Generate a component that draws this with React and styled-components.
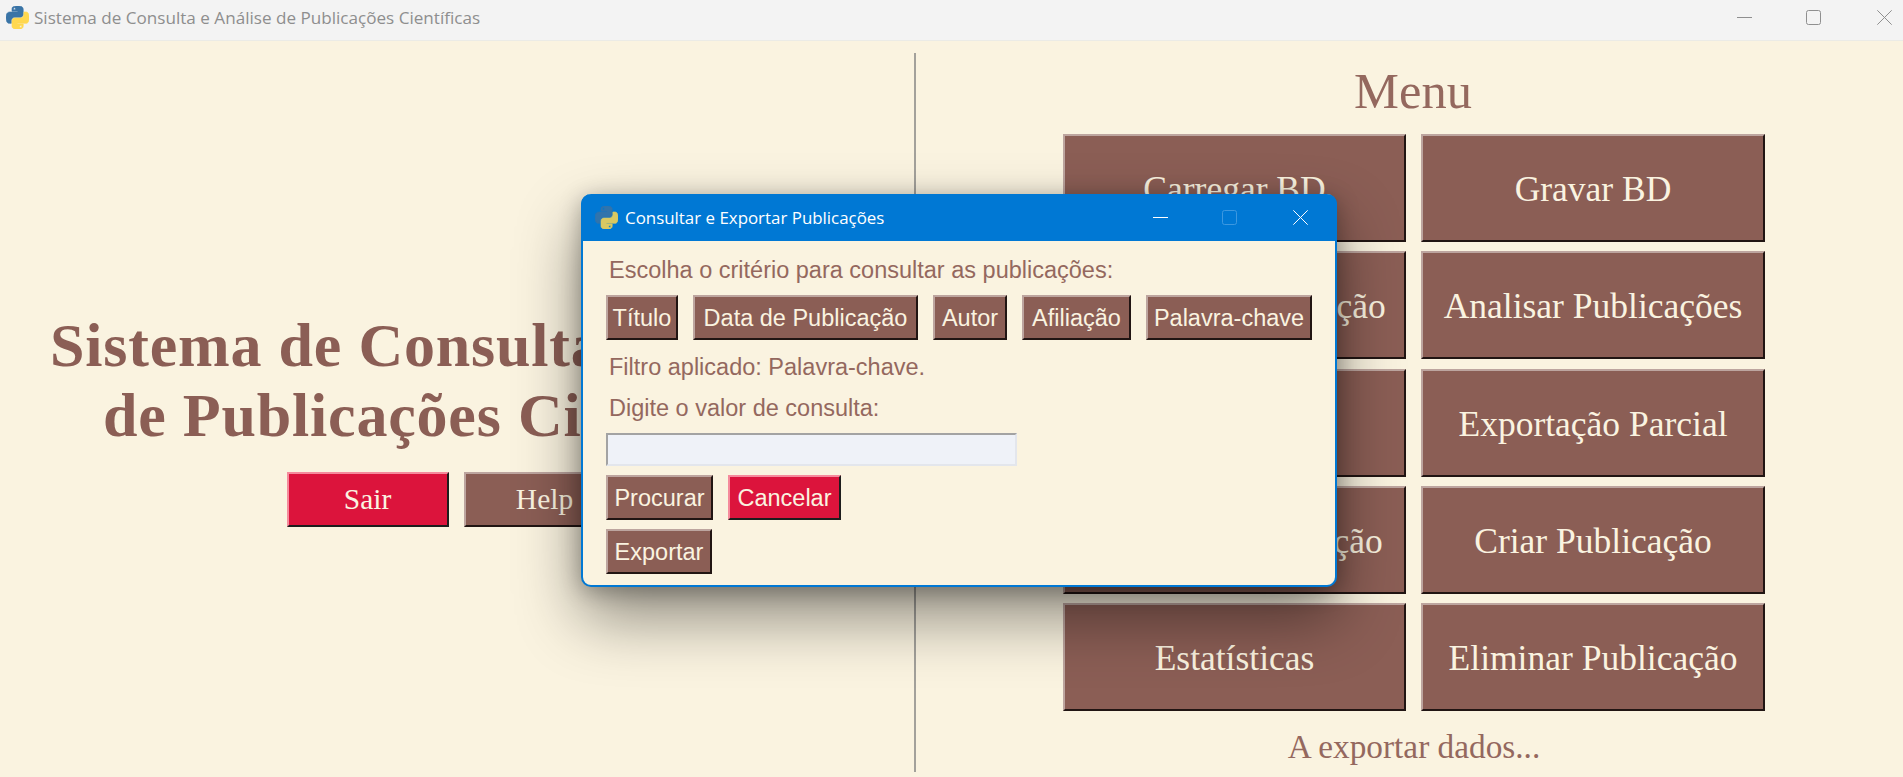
import React from 'react'
import styled, { createGlobalStyle } from 'styled-components'

const cream = '#faf3e0'
const brown = '#8b5e55'
const softBrown = '#94685e'
const crimson = '#dc143c'
const blue = '#0078d4'

const GlobalStyle = createGlobalStyle`
html, body {
    margin: 0;
    padding: 0;
    height: 100%;
    overflow: hidden;
    background: ${cream};
}
`

const Page = styled.div`
position: relative;
width: 1903px;
height: 777px;
display: flex;
flex-direction: column;
overflow: hidden;
background: ${cream};
`

const TitleBar = styled.header`
height: 41px;
flex: none;
display: flex;
align-items: center;
padding: 0 0 6px 6px;
background: #f3f3f3;
border-bottom: 1px solid #ebebe6;
box-sizing: border-box;
`

const AppTitle = styled.span`
margin-left: 5px;
font-family: "Open Sans", sans-serif;
font-size: 17.1px;
color: #8e8e8e;
flex: 1;
white-space: nowrap;
`

const Controls = styled.div`
display: flex;
align-items: center;
height: 100%;
`

const ControlSlot = styled.span`
width: ${props => props.$w}px;
display: flex;
justify-content: flex-start;
`

const Main = styled.main`
flex: 1;
display: flex;
min-height: 0;
`

const LeftPane = styled.section`
width: 914px;
flex: none;
display: flex;
flex-direction: column;
align-items: center;
padding: 269px 2px 0 0;
box-sizing: border-box;
`

const BigTitle = styled.h1`
margin: 0;
font-family: "Liberation Serif", serif;
font-weight: 700;
font-size: 62px;
letter-spacing: 0.8px;
line-height: 70px;
color: ${brown};
text-align: center;
white-space: nowrap;
`

const ButtonRow = styled.div`
display: flex;
gap: 15px;
margin-top: 22px;
`

const PanelButton = styled.button`
box-sizing: border-box;
display: flex;
align-items: center;
justify-content: center;
width: ${props => props.$wide ? '100%' : '162px'};
height: ${props => props.$wide ? '108px' : '55px'};
padding: ${props => props.$wide ? '2px 0 0' : '0'};
font-family: "Liberation Serif", serif;
font-size: ${props => props.$wide ? '35.5px' : '29.5px'};
color: ${cream};
background: ${props => props.$danger ? crimson : brown};
border: 2px solid;
border-color: ${props => props.$danger ? '#f58a9c #1d1d1d #1d1d1d #f58a9c' : '#bda59f #211513 #211513 #bda59f'};
`

const Divider = styled.div`
width: 2px;
flex: none;
margin: 12px 0 5px;
background: #a3a19b;
`

const RightPane = styled.section`
flex: 1;
display: flex;
flex-direction: column;
padding-left: 147px;
`

const MenuColumn = styled.div`
width: 702px;
display: flex;
flex-direction: column;
align-items: center;
`

const MenuTitle = styled.h2`
margin: 0 2px 0 0;
height: 93px;
font-family: "Liberation Serif", serif;
font-weight: 400;
font-size: 50.5px;
line-height: 100px;
color: ${softBrown};
`

const MenuGrid = styled.div`
display: grid;
grid-template-columns: 343px 344px;
grid-auto-rows: 108px;
column-gap: 15px;
row-gap: 9.25px;
`

const Status = styled.p`
margin: 16px 0 0;
font-family: "Liberation Serif", serif;
font-size: 33.3px;
line-height: 40px;
color: ${softBrown};
`

const Dialog = styled.div`
position: absolute;
left: 581px;
top: 194px;
width: 756px;
height: 393px;
box-sizing: border-box;
display: flex;
flex-direction: column;
background: ${cream};
border: 2px solid ${blue};
border-top: 0;
border-radius: 10px;
box-shadow: 0 30px 64px rgba(0, 0, 0, 0.44), 0 4px 22px rgba(0, 0, 0, 0.28);
`

const DialogBar = styled.div`
height: 47px;
flex: none;
margin: 0 -2px;
display: flex;
align-items: center;
padding-left: 14px;
background: ${blue};
border-radius: 10px 10px 0 0;
`

const DialogTitle = styled.span`
margin-left: 7px;
flex: 1;
font-family: "Open Sans", sans-serif;
font-size: 16.9px;
color: #fff;
white-space: nowrap;
`

const DialogBody = styled.div`
padding: 15px 0 0 23px;
display: flex;
flex-direction: column;
align-items: flex-start;
`

const Label = styled.div`
margin: ${props => props.$top || 0}px 0 0 3px;
height: 28px;
font-family: "Liberation Sans", sans-serif;
font-size: 23.5px;
line-height: 28px;
color: ${softBrown};
white-space: nowrap;
`

const ToolRow = styled.div`
display: flex;
gap: 15px;
margin-top: ${props => props.$top}px;
`

const ToolButton = styled.button`
box-sizing: border-box;
width: ${props => props.$w}px;
height: 45px;
padding: 1px 0 0;
font-family: "Liberation Sans", sans-serif;
font-size: 23.5px;
color: ${cream};
background: ${props => props.$danger ? crimson : brown};
border: 2px solid;
border-color: ${props => props.$danger ? '#f58a9c #1d1d1d #1d1d1d #f58a9c' : '#bda59f #211513 #211513 #bda59f'};
white-space: nowrap;
`

const SearchInput = styled.input`
box-sizing: border-box;
display: block;
width: 411px;
height: 33px;
margin-top: 11px;
padding: 0 4px;
background: #eff2f8;
border: 2px solid;
border-color: #a3a3a3 #e3e6ec #e3e6ec #a3a3a3;
`

const LogoMark = styled.svg`
flex: none;
opacity: ${props => props.$dim ? 0.85 : 1};
`

const PythonLogo = ({ dim }) => (
    <LogoMark $dim={dim} width="23" height="23" viewBox="0 0 110 110">
        <path fill="#3a74a6" stroke="#3a74a6" strokeWidth="3" d="M54.919,0.001c-4.584,0.022-8.961,0.413-12.812,1.095C30.76,3.099,28.7,7.295,28.7,15.032v10.219h26.813v3.406H28.7H18.638c-7.793,0-14.616,4.684-16.75,13.594c-2.462,10.213-2.571,16.586,0,27.25c1.906,7.938,6.458,13.594,14.25,13.594h9.219v-12.25c0-8.85,7.657-16.656,16.75-16.656h26.781c7.455,0,13.406-6.138,13.406-13.625v-25.531c0-7.266-6.13-12.725-13.406-13.937C64.281,0.328,59.502-0.02,54.919,0.001z M40.419,8.219c2.77,0,5.031,2.299,5.031,5.125c0,2.816-2.262,5.094-5.031,5.094c-2.78,0-5.031-2.277-5.031-5.094C35.388,10.518,37.639,8.219,40.419,8.219z" />
        <path fill="#ffd84f" stroke="#ffd84f" strokeWidth="3" d="M85.638,28.657v11.906c0,9.231-7.826,17-16.75,17H42.106c-7.336,0-13.406,6.278-13.406,13.625v25.531c0,7.266,6.319,11.54,13.406,13.625c8.487,2.496,16.626,2.947,26.781,0c6.75-1.954,13.406-5.888,13.406-13.625V86.501H55.513v-3.406h26.781h13.406c7.793,0,10.696-5.436,13.406-13.594c2.799-8.399,2.68-16.476,0-27.25c-1.926-7.757-5.604-13.594-13.406-13.594H85.638z M70.575,93.313c2.78,0,5.031,2.277,5.031,5.094c0,2.826-2.252,5.125-5.031,5.125c-2.77,0-5.031-2.299-5.031-5.125C65.544,95.59,67.805,93.313,70.575,93.313z" />
    </LogoMark>
)

const MinIcon = ({ color }) => (
    <svg width="15" height="15" viewBox="0 0 15 15"><path d="M0 7.5h15" stroke={color} strokeWidth="1" fill="none" /></svg>
)

const MaxIcon = ({ color }) => (
    <svg width="15" height="15" viewBox="0 0 15 15"><rect x="0.5" y="0.5" width="14" height="14" rx="2" stroke={color} strokeWidth="1" fill="none" /></svg>
)

const CloseIcon = ({ color }) => (
    <svg width="15" height="15" viewBox="0 0 15 15"><path d="M0.3 0.3L14.7 14.7M14.7 0.3L0.3 14.7" stroke={color} strokeWidth="1" fill="none" /></svg>
)

const menuItems = [
    'Carregar BD', 'Gravar BD',
    'Consultar Publicação', 'Analisar Publicações',
    'Listar Autores', 'Exportação Parcial',
    'Atualizar Publicação', 'Criar Publicação',
    'Estatísticas', 'Eliminar Publicação',
]

const filters = [
    { label: 'Título', w: 72 },
    { label: 'Data de Publicação', w: 225 },
    { label: 'Autor', w: 74 },
    { label: 'Afiliação', w: 109 },
    { label: 'Palavra-chave', w: 166 },
]

const App = () => {
    return (
        <Page>
            <GlobalStyle />
            <TitleBar>
                <PythonLogo />
                <AppTitle>Sistema de Consulta e Análise de Publicações Científicas</AppTitle>
                <Controls>
                    <ControlSlot $w={69}><MinIcon color="#8f8f8f" /></ControlSlot>
                    <ControlSlot $w={71}><MaxIcon color="#8f8f8f" /></ControlSlot>
                    <ControlSlot $w={26}><CloseIcon color="#8f8f8f" /></ControlSlot>
                </Controls>
            </TitleBar>
            <Main>
                <LeftPane>
                    <BigTitle>Sistema de Consulta e Análise<br />de Publicações Científicas</BigTitle>
                    <ButtonRow>
                        <PanelButton $danger>Sair</PanelButton>
                        <PanelButton>Help</PanelButton>
                    </ButtonRow>
                </LeftPane>
                <Divider />
                <RightPane>
                    <MenuColumn>
                        <MenuTitle>Menu</MenuTitle>
                        <MenuGrid>
                            {menuItems.map(item => <PanelButton $wide key={item}>{item}</PanelButton>)}
                        </MenuGrid>
                        <Status>A exportar dados...</Status>
                    </MenuColumn>
                </RightPane>
            </Main>
            <Dialog>
                <DialogBar>
                    <PythonLogo dim />
                    <DialogTitle>Consultar e Exportar Publicações</DialogTitle>
                    <Controls>
                        <ControlSlot $w={69}><MinIcon color="#ffffff" /></ControlSlot>
                        <ControlSlot $w={71}><MaxIcon color="#3d98e0" /></ControlSlot>
                        <ControlSlot $w={44}><CloseIcon color="#ffffff" /></ControlSlot>
                    </Controls>
                </DialogBar>
                <DialogBody>
                    <Label>Escolha o critério para consultar as publicações:</Label>
                    <ToolRow $top={11}>
                        {filters.map(f => <ToolButton key={f.label} $w={f.w}>{f.label}</ToolButton>)}
                    </ToolRow>
                    <Label $top={13}>Filtro aplicado: Palavra-chave.</Label>
                    <Label $top={13}>Digite o valor de consulta:</Label>
                    <SearchInput />
                    <ToolRow $top={9}>
                        <ToolButton $w={107}>Procurar</ToolButton>
                        <ToolButton $danger $w={113}>Cancelar</ToolButton>
                    </ToolRow>
                    <ToolRow $top={9}>
                        <ToolButton $w={106}>Exportar</ToolButton>
                    </ToolRow>
                </DialogBody>
            </Dialog>
        </Page>
    )
}

export default App
